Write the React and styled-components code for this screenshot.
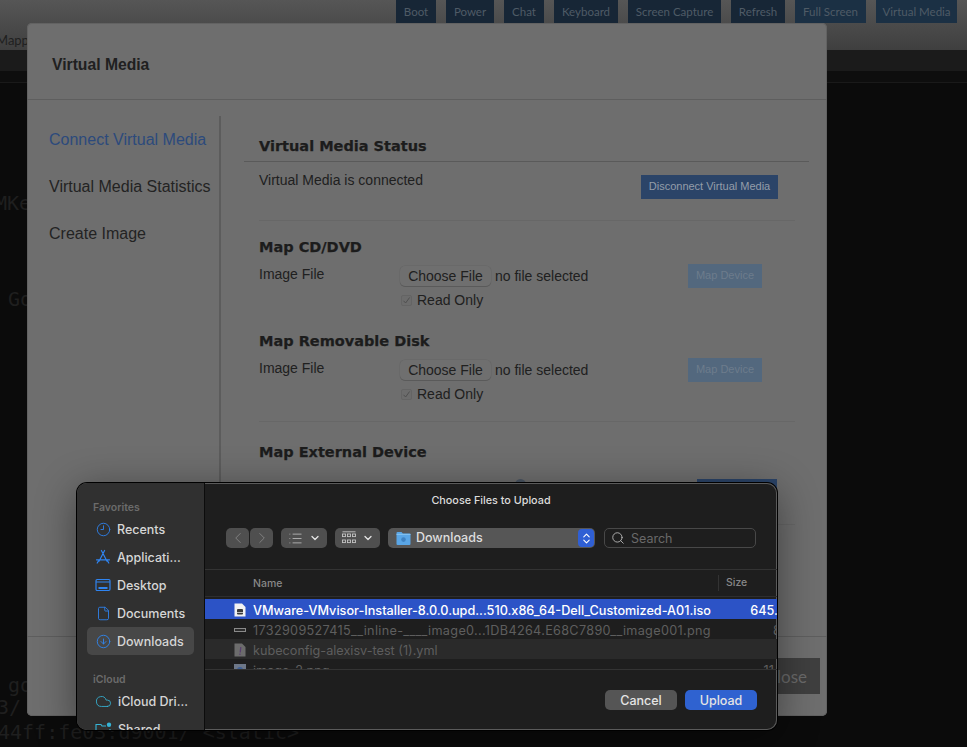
import React from "react";
import styled, { createGlobalStyle } from "styled-components";
import {
  ChevronDown,
  ChevronLeft,
  ChevronRight,
  ChevronsUpDown,
  CircleArrowDown,
  Clock9,
  Cloud,
  File,
  List,
  Search,
} from "lucide-react";

const TOP_BUTTONS = [
  { name: "Boot", w: 40 },
  { name: "Power", w: 48 },
  { name: "Chat", w: 40 },
  { name: "Keyboard", w: 64 },
  { name: "Screen Capture", w: 93 },
  { name: "Refresh", w: 54 },
  { name: "Full Screen", w: 71 },
  { name: "Virtual Media", w: 81 },
];

const GlobalStyle = createGlobalStyle`
  html, body {
    margin: 0;
    padding: 0;
    background: #0b0b0b;
  }
  * {
    box-sizing: border-box;
  }
`;

function AppsIcon() {
  return (
    <svg width="16" height="16" viewBox="0 0 16 16" fill="none" stroke="#2f84f0" strokeWidth="1.2" strokeLinecap="round">
      <path d="M9.6 1.5 4 12.2M6.4 1.5 12 12.2M1.5 10.8h13M2.2 14l1.2-1.8M13.8 14l-1.2-1.8" />
    </svg>
  );
}

function DesktopIcon() {
  return (
    <svg width="16" height="14" viewBox="0 0 16 14" fill="none" stroke="#2f84f0" strokeWidth="1.2">
      <rect x="1" y="1.5" width="14" height="11" rx="1.2" />
      <path d="M1 4h14" />
      <path d="M3.5 10h9" strokeWidth="2" />
    </svg>
  );
}

function SharedIcon() {
  return (
    <svg width="17" height="14" viewBox="0 0 17 14" fill="none" stroke="#36b4d6" strokeWidth="1.1">
      <path d="M1 12V2.5h5l1 1.5h4M1 12.5h14V7" />
      <circle cx="14" cy="2.8" r="2.2" fill="#36b4d6" stroke="none" />
    </svg>
  );
}

function GridIcon() {
  return (
    <svg width="14" height="14" viewBox="0 0 14 14" fill="none" stroke="#c4c4c4" strokeWidth="0.9">
      <path d="M0.5 0.8h13" />
      <rect x="0.5" y="3" width="3" height="2.6" />
      <rect x="5.5" y="3" width="3" height="2.6" />
      <rect x="10.5" y="3" width="3" height="2.6" />
      <rect x="0.5" y="9" width="3" height="2.6" />
      <rect x="5.5" y="9" width="3" height="2.6" />
      <rect x="10.5" y="9" width="3" height="2.6" />
    </svg>
  );
}

function FolderIcon() {
  return (
    <svg width="15" height="14" viewBox="0 0 15 14">
      <path d="M0.5 2a1 1 0 0 1 1-1h4l1.4 1.5h6.6a1 1 0 0 1 1 1V13a1 1 0 0 1-1 1h-12a1 1 0 0 1-1-1z" fill="#5aa6e6" />
      <path d="M0.5 3.4h14" stroke="#86c2f0" strokeWidth="1" />
      <circle cx="7.5" cy="8.6" r="2.3" fill="#3f82c2" />
    </svg>
  );
}

function IsoIcon() {
  return (
    <svg width="12" height="14" viewBox="0 0 12 14">
      <path d="M0.5 0.5h7.5l3.5 3.5v9.5h-11z" fill="#f2f2f2" />
      <rect x="3" y="6" width="6" height="5.5" rx="1" fill="#3a3a3a" />
      <path d="M3 9.5h6" stroke="#f2f2f2" strokeWidth="0.7" />
    </svg>
  );
}

function PngStripIcon() {
  return (
    <svg width="12" height="14" viewBox="0 0 12 14">
      <rect x="0" y="5" width="12" height="4" fill="#8a8a8a" />
      <rect x="1" y="6" width="10" height="2" fill="#2c2c2c" />
    </svg>
  );
}

function YamlIcon() {
  return (
    <svg width="12" height="14" viewBox="0 0 12 14">
      <path d="M0.5 0.5h7.5l3.5 3.5v9.5h-11z" fill="#6c6c6c" />
      <path d="M6.8 4 6.2 9.5" stroke="#5a4070" strokeWidth="1.3" />
      <circle cx="5.9" cy="11.3" r="0.8" fill="#5a4070" />
    </svg>
  );
}

function ThumbIcon() {
  return (
    <svg width="12" height="14" viewBox="0 0 12 14">
      <rect x="0" y="1" width="12" height="12" fill="#6d7788" />
      <circle cx="6" cy="7" r="3" fill="#3d5f96" />
    </svg>
  );
}

const FAVORITES = [
  { name: "Recents", icon: <Clock9 size={15} color="#2f84f0" strokeWidth={1.4} /> },
  { name: "Applicati...", icon: <AppsIcon /> },
  { name: "Desktop", icon: <DesktopIcon /> },
  { name: "Documents", icon: <File size={15} color="#2f84f0" strokeWidth={1.4} /> },
  { name: "Downloads", icon: <CircleArrowDown size={15} color="#2f88f5" strokeWidth={1.4} />, active: true },
];

const ICLOUD = [
  { name: "iCloud Dri...", icon: <Cloud size={17} color="#36b4d6" strokeWidth={1.2} /> },
  { name: "Shared", icon: <SharedIcon /> },
];

const FILES = [
  {
    name: "VMware-VMvisor-Installer-8.0.0.upd...510.x86_64-Dell_Customized-A01.iso",
    size: "645.2 MB",
    icon: <IsoIcon />,
    selected: true,
  },
  {
    name: "1732909527415__inline-____image0...1DB4264.E68C7890__image001.png",
    size: "86 KB",
    icon: <PngStripIcon />,
    wide: true,
  },
  { name: "kubeconfig-alexisv-test (1).yml", size: "", icon: <YamlIcon />, striped: true },
  { name: "image_2.png", size: "11.4 MB", icon: <ThumbIcon /> },
];

function MapSection({ title }) {
  return (
    <MapBlock>
      <SectionTitle>{title}</SectionTitle>
      <FileRow>
        <FieldLabel>Image File</FieldLabel>
        <FileControl>
          <FileLine>
            <ChooseButton>Choose File</ChooseButton>
            <span>no file selected</span>
          </FileLine>
          <CheckLine>
            <CheckBox>
              <svg width="9" height="9" viewBox="0 0 9 9" fill="none" stroke="#4f4f4f" strokeWidth="1">
                <path d="M1.5 4.8 3.6 7 7.6 1.5" />
              </svg>
            </CheckBox>
            Read Only
          </CheckLine>
        </FileControl>
        <MapButton>Map Device</MapButton>
      </FileRow>
    </MapBlock>
  );
}

export default function App() {
  return (
    <Page>
      <GlobalStyle />
      <TopBar>
        <BarLabel>Mapp</BarLabel>
        <TopButtons>
          {TOP_BUTTONS.map((b, idx) => (
            <TopButton key={b.name} $w={b.w} $bright={idx > 5}>
              {b.name}
            </TopButton>
          ))}
        </TopButtons>
      </TopBar>
      <SubBar />
      <Terminal>
        <TermLine $top={109} $left={-5}>MKe</TermLine>
        <TermLine $top={74} $left={8}>Go</TermLine>
        <TermLine $top={364} $left={8}>go</TermLine>
        <TermLine $top={0} $left={-3}>3/</TermLine>
        <TermLine $top={3} $left={-2}>44ff:fe03:d9001/ &lt;static&gt;</TermLine>
      </Terminal>

      <Modal>
        <ModalHeader>Virtual Media</ModalHeader>
        <ModalBody>
          <SideMenu>
            <SideLink $active>Connect Virtual Media</SideLink>
            <SideLink>Virtual Media Statistics</SideLink>
            <SideLink>Create Image</SideLink>
          </SideMenu>
          <Content>
            <StatusHead>
              <SectionTitle>Virtual Media Status</SectionTitle>
            </StatusHead>
            <StatusRow>
              <span>Virtual Media is connected</span>
              <DisconnectButton>Disconnect Virtual Media</DisconnectButton>
            </StatusRow>
            <MapGroup>
              <MapSection title="Map CD/DVD" />
              <MapSection title="Map Removable Disk" />
            </MapGroup>
            <ExternalGroup>
              <SectionTitle>Map External Device</SectionTitle>
              <ExternalRow>
                <RadioDot />
                <ExternalButton>Map Device</ExternalButton>
              </ExternalRow>
              <ExternalRule />
            </ExternalGroup>
          </Content>
        </ModalBody>
        <ModalFooter>
          <CloseButton>Close</CloseButton>
        </ModalFooter>
      </Modal>

      <Dialog>
        <Sidebar>
          <SidebarLabel>Favorites</SidebarLabel>
          {FAVORITES.map((item) => (
            <SidebarItem key={item.name} $active={item.active}>
              <SidebarIcon>{item.icon}</SidebarIcon>
              {item.name}
            </SidebarItem>
          ))}
          <SidebarLabel $gap>iCloud</SidebarLabel>
          {ICLOUD.map((item) => (
            <SidebarItem key={item.name}>
              <SidebarIcon>{item.icon}</SidebarIcon>
              {item.name}
            </SidebarItem>
          ))}
        </Sidebar>
        <Main>
          <DialogTitle>Choose Files to Upload</DialogTitle>
          <Toolbar>
            <NavGroup>
              <ToolButton $w={23}>
                <ChevronLeft size={18} color="#858585" strokeWidth={1.2} />
              </ToolButton>
              <ToolButton $w={23}>
                <ChevronRight size={18} color="#858585" strokeWidth={1.2} />
              </ToolButton>
            </NavGroup>
            <ToolButton $w={46}>
              <List size={15} color="#c8c8c8" strokeWidth={1.2} />
              <ChevronDown size={12} color="#e4e4e4" strokeWidth={2.6} />
            </ToolButton>
            <ToolButton $w={45}>
              <GridIcon />
              <ChevronDown size={12} color="#e4e4e4" strokeWidth={2.6} />
            </ToolButton>
            <PathPopup>
              <FolderIcon />
              <PathName>Downloads</PathName>
              <PathStepper>
                <ChevronsUpDown size={13} color="#fff" strokeWidth={2} />
              </PathStepper>
            </PathPopup>
            <SearchBox>
              <Search size={14} color="#bcbcbc" strokeWidth={1.5} />
              Search
            </SearchBox>
          </Toolbar>
          <ColumnHeader>
            <NameColumn>Name</NameColumn>
            <SizeColumn>Size</SizeColumn>
          </ColumnHeader>
          <FileList>
            {FILES.map((f) => (
              <FileItem key={f.name} $selected={f.selected} $striped={f.striped}>
                <FileIcon>{f.icon}</FileIcon>
                <FileName $wide={f.wide}>{f.name}</FileName>
                <FileSize>{f.size}</FileSize>
              </FileItem>
            ))}
          </FileList>
          <DialogFooter>
            <DialogButton>Cancel</DialogButton>
            <DialogButton $primary>Upload</DialogButton>
          </DialogFooter>
        </Main>
      </Dialog>
    </Page>
  );
}

const Page = styled.div`
  position: relative;
  width: 967px;
  height: 747px;
  overflow: hidden;
  background: #0b0b0b;
`;

const TopBar = styled.div`
  display: flex;
  justify-content: space-between;
  height: 50px;
  padding-right: 10px;
  background: linear-gradient(#565656, #3f3f3f);
`;

const BarLabel = styled.div`
  margin: 32px 0 0 -4px;
  font: 13px "Lato", sans-serif;
  color: #1f1f1f;
`;

const TopButtons = styled.div`
  display: flex;
  gap: 10px;
`;

const TopButton = styled.div`
  display: flex;
  align-items: center;
  justify-content: center;
  width: ${(props) => props.$w}px;
  height: 23px;
  background: ${(props) => (props.$bright ? "#1b3044" : "#172636")};
  font: 11.5px "Lato", sans-serif;
  color: #4f5b66;
`;

const SubBar = styled.div`
  height: 33px;
  background: linear-gradient(#1b1b1b 0 21px, #0e0e0e 21px 32px, #1a1a1a 32px);
`;

const Terminal = styled.div`
  display: flex;
  flex-direction: column;
`;

const TermLine = styled.div`
  margin: ${(props) => props.$top}px 0 0 ${(props) => props.$left}px;
  font: 20px/22px "DejaVu Sans Mono", monospace;
  white-space: pre;
  color: #1f1f1f;
`;

const Modal = styled.div`
  position: absolute;
  top: 23px;
  left: 27px;
  display: flex;
  flex-direction: column;
  width: 800px;
  height: 693px;
  border-radius: 5px;
  background: #6e6e6e;
  box-shadow: inset 0 0 0 1px #626262;
  font: 14px "Liberation Sans", Arial, sans-serif;
  color: #202020;
`;

const ModalHeader = styled.div`
  display: flex;
  align-items: center;
  flex: 0 0 77px;
  padding: 7px 0 0 25px;
  border-bottom: 1px solid #5e5e5e;
  font-size: 15.7px;
  font-weight: 700;
`;

const ModalBody = styled.div`
  display: flex;
  flex: 1;
  min-height: 0;
  padding-top: 16px;
`;

const SideMenu = styled.div`
  display: flex;
  flex-direction: column;
  gap: 28px;
  flex: 0 0 194px;
  padding: 14px 0 0 22px;
  border-right: 2px solid #5c5c5c;
  font-size: 16px;
`;

const SideLink = styled.div`
  line-height: 19px;
  color: ${(props) => (props.$active ? "#2c4a7c" : "#232323")};
`;

const Content = styled.div`
  flex: 1;
  min-width: 0;
  padding-left: 23px;
`;

const StatusHead = styled.div`
  display: flex;
  align-items: flex-end;
  width: 565px;
  height: 46px;
  padding: 0 0 5px 15px;
  border-bottom: 1px solid #5a5a5a;
`;

const SectionTitle = styled.div`
  font: 700 14.5px/20px "DejaVu Sans", sans-serif;
  -webkit-text-stroke: 0.25px #1c1c1c;
  color: #1c1c1c;
`;

const StatusRow = styled.div`
  display: flex;
  justify-content: space-between;
  align-items: flex-start;
  width: 536px;
  height: 59px;
  margin-left: 15px;
  padding: 10px 17px 0 0;
  border-bottom: 1px solid #676767;
`;

const DisconnectButton = styled.div`
  display: flex;
  align-items: center;
  justify-content: center;
  width: 137px;
  height: 24px;
  margin-top: 3px;
  padding-bottom: 2px;
  background: #2b4468;
  font-size: 11px;
  color: #949da9;
`;

const MapGroup = styled.div`
  display: flex;
  flex-direction: column;
  gap: 22px;
  width: 536px;
  height: 201px;
  margin-left: 15px;
  padding-top: 16px;
  border-bottom: 1px solid #676767;
`;

const MapBlock = styled.div`
  display: flex;
  flex-direction: column;
  gap: 8px;
`;

const FileRow = styled.div`
  display: grid;
  grid-template-columns: 141px 1fr 74px;
  align-items: start;
  padding-right: 33px;
`;

const FieldLabel = styled.div`
  margin-top: 1px;
  line-height: 16px;
`;

const FileControl = styled.div`
  display: flex;
  flex-direction: column;
  gap: 5px;
  margin-top: 1px;
`;

const FileLine = styled.div`
  display: flex;
  align-items: center;
  gap: 4px;
`;

const ChooseButton = styled.div`
  display: flex;
  align-items: center;
  justify-content: center;
  width: 91px;
  height: 20px;
  border-radius: 5px;
  background: #6f6f6f;
  box-shadow: 0 1px 0 #5a5a5a, 0 0 0 0.5px #656565;
`;

const CheckLine = styled.div`
  display: flex;
  align-items: center;
  gap: 5px;
  padding-left: 1px;
  line-height: 18px;
`;

const CheckBox = styled.div`
  display: flex;
  align-items: center;
  justify-content: center;
  width: 11px;
  height: 11px;
  border: 1px solid #646464;
  border-radius: 2px;
  background: #6c6c6c;
`;

const MapButton = styled.div`
  display: flex;
  align-items: center;
  justify-content: center;
  height: 24px;
  margin-top: -1px;
  padding-bottom: 2px;
  background: #53687e;
  font-size: 11px;
  color: #6d7c8c;
`;

const ExternalGroup = styled.div`
  padding: 20px 0 0 15px;
`;

const ExternalRow = styled.div`
  display: flex;
  justify-content: space-between;
  width: 518px;
  margin-top: 17px;
  padding-left: 256px;
`;

const RadioDot = styled.div`
  width: 11px;
  height: 11px;
  border-radius: 50%;
  background: #4a5563;
`;

const ExternalButton = styled.div`
  display: flex;
  align-items: center;
  justify-content: center;
  width: 80px;
  height: 24px;
  background: #2b4468;
  font-size: 11px;
  color: #949da9;
`;

const ExternalRule = styled.div`
  width: 536px;
  margin-top: 21px;
  border-bottom: 1px solid #676767;
`;

const ModalFooter = styled.div`
  display: flex;
  justify-content: flex-end;
  flex: 0 0 80px;
  padding: 21px 7px 0 0;
  border-top: 1px solid #5e5e5e;
`;

const CloseButton = styled.div`
  display: flex;
  align-items: center;
  justify-content: flex-end;
  width: 72px;
  height: 36px;
  padding-right: 13px;
  background: #3f3f3f;
  font: 17px "Lato", sans-serif;
  color: #6a6a6a;
`;

const Dialog = styled.div`
  position: absolute;
  top: 483px;
  left: 77px;
  display: flex;
  width: 700px;
  height: 247px;
  border-radius: 10px;
  overflow: hidden;
  background: #1e1e1e;
  box-shadow: 0 0 0 1px #000, inset 0 0 0 1px #5a5a5a, 0 8px 40px rgba(0, 0, 0, 0.45);
  font-family: "Inter", sans-serif;
`;

const Sidebar = styled.div`
  flex: 0 0 128px;
  padding: 16px 10px 0;
  overflow: hidden;
  background: #303030;
  border-right: 1px solid #0c0c0c;
`;

const SidebarLabel = styled.div`
  height: 16px;
  margin-top: ${(props) => (props.$gap ? "16px" : "0")};
  padding: 1px 0 0 6px;
  font-size: 10.5px;
  font-weight: 600;
  line-height: 16px;
  color: #6b6b6b;
`;

const SidebarItem = styled.div`
  display: flex;
  align-items: center;
  gap: 6px;
  height: 28px;
  padding-left: 8px;
  border-radius: 5px;
  background: ${(props) => (props.$active ? "#474747" : "transparent")};
  font-size: 12.5px;
  font-weight: 500;
  white-space: nowrap;
  color: #d6d6d6;
`;

const SidebarIcon = styled.span`
  display: flex;
  align-items: center;
  justify-content: center;
  flex: 0 0 16px;
`;

const Main = styled.div`
  display: flex;
  flex-direction: column;
  flex: 1;
  min-width: 0;
`;

const DialogTitle = styled.div`
  height: 16px;
  margin-top: 10px;
  text-align: center;
  font-size: 10.8px;
  font-weight: 500;
  line-height: 16px;
  color: #dcdcdc;
`;

const Toolbar = styled.div`
  display: flex;
  gap: 8px;
  margin: 19px 0 21px 21px;
`;

const NavGroup = styled.div`
  display: flex;
  gap: 1px;
`;

const ToolButton = styled.div`
  display: flex;
  align-items: center;
  justify-content: center;
  gap: 6px;
  width: ${(props) => props.$w}px;
  height: 20px;
  border-radius: 5px;
  background: #4f4f4f;
`;

const PathPopup = styled.div`
  display: flex;
  align-items: center;
  gap: 5px;
  width: 207px;
  height: 20px;
  padding-left: 8px;
  border-radius: 5px;
  background: #565656;
`;

const PathName = styled.span`
  flex: 1;
  padding-bottom: 1px;
  font-size: 12.5px;
  font-weight: 500;
  color: #dedede;
`;

const PathStepper = styled.span`
  display: flex;
  align-items: center;
  justify-content: center;
  width: 16px;
  height: 18px;
  margin-right: 1px;
  border-radius: 4px;
  background: #2f5fd4;
`;

const SearchBox = styled.div`
  display: flex;
  align-items: center;
  gap: 6px;
  width: 152px;
  height: 20px;
  margin-left: 1px;
  padding-left: 6px;
  border: 1px solid #484848;
  border-radius: 5px;
  font-size: 12.5px;
  color: #696969;
`;

const ColumnHeader = styled.div`
  display: flex;
  align-items: center;
  height: 28px;
  border-top: 1px solid #333;
  border-bottom: 1px solid #2e2e2e;
  font-size: 10.5px;
  font-weight: 500;
  color: #888;
`;

const NameColumn = styled.div`
  flex: 0 0 513px;
  padding-left: 48px;
`;

const SizeColumn = styled.div`
  height: 16px;
  padding-left: 7px;
  border-left: 1px solid #333;
  line-height: 16px;
`;

const FileList = styled.div`
  flex: 0 0 70px;
  width: 604px;
  margin-top: 2px;
  overflow: hidden;
`;

const FileItem = styled.div`
  display: flex;
  align-items: center;
  gap: 6px;
  height: 20px;
  padding: 2px 0 0 28px;
  background: ${(props) =>
    props.$selected ? "#2c53c6" : props.$striped ? "#2a2a2a" : "transparent"};
  font-size: 12.67px;
  font-weight: ${(props) => (props.$selected ? 500 : 400)};
  color: ${(props) => (props.$selected ? "#fff" : "#5e5e5e")};
`;

const FileIcon = styled.span`
  display: flex;
  align-items: center;
  justify-content: center;
  flex: 0 0 14px;
`;

const FileName = styled.span`
  flex: 1;
  letter-spacing: ${(props) => (props.$wide ? "0.32px" : "0")};
  white-space: nowrap;
`;

const FileSize = styled.span`
  white-space: nowrap;
`;

const DialogFooter = styled.div`
  display: flex;
  justify-content: flex-end;
  gap: 8px;
  flex: 1;
  padding: 20px 20px 0 0;
  border-top: 1px solid #333;
`;

const DialogButton = styled.div`
  display: flex;
  align-items: center;
  justify-content: center;
  width: 72px;
  height: 20px;
  border-radius: 5px;
  background: ${(props) => (props.$primary ? "#2f62d0" : "#555")};
  font-size: 12.5px;
  font-weight: 500;
  color: #e4e4e4;
`;
